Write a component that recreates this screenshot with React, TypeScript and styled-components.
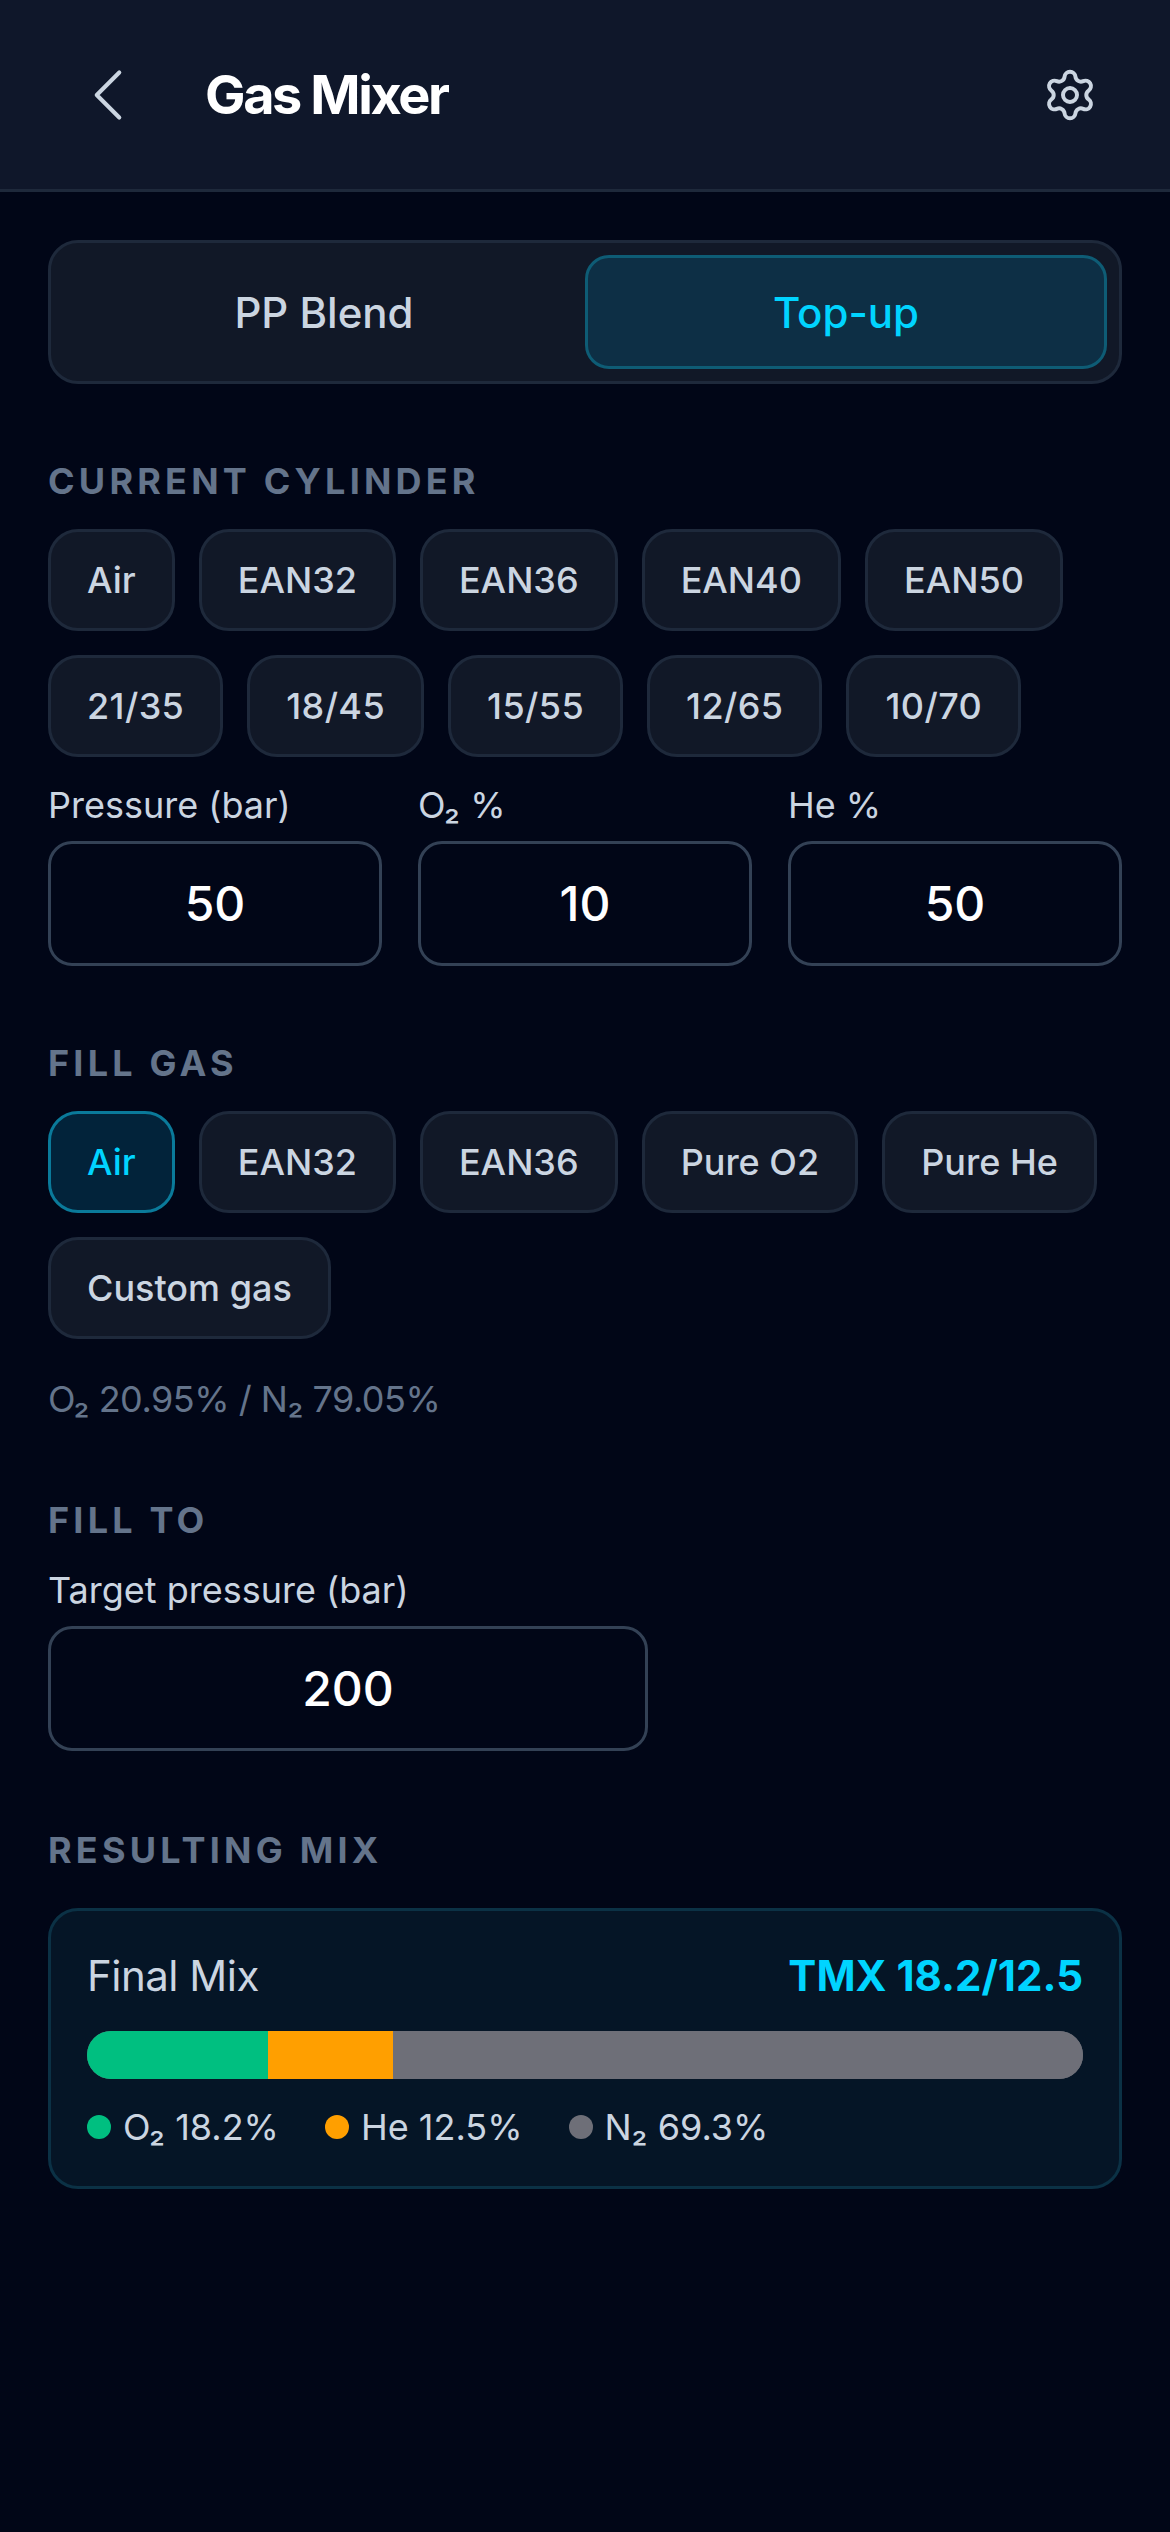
import styled, { createGlobalStyle } from "styled-components";
import { ChevronLeft, Settings } from "lucide-react";

const GlobalStyle = createGlobalStyle`
    html, body {
        margin: 0;
        padding: 0;
        background: #010617;
    }
    * {
        box-sizing: border-box;
    }
`

const Page = styled.div`
    width: 1170px;
    min-height: 2532px;
    background: #010617;
    font-family: Inter, "Liberation Sans", sans-serif;
    color: #cbd5e1;
`

const Header = styled.header`
    height: 192px;
    display: flex;
    align-items: center;
    background: #0f172a;
    border-bottom: 3px solid #1e293b;
    padding: 0 72px 0 63px;
`

const BackIcon = styled(ChevronLeft)`
    color: #cbd5e1;
    flex-shrink: 0;
`

const Title = styled.h1`
    flex: 1;
    margin: 0 0 0 52px;
    font-size: 54px;
    line-height: 66px;
    font-weight: 700;
    letter-spacing: -2.4px;
    color: #fff;
`

const SettingsIcon = styled(Settings)`
    color: #cbd5e1;
`

const Main = styled.main`
    padding: 48px;
`

const Segments = styled.div`
    height: 144px;
    display: grid;
    grid-template-columns: 1fr 1fr;
    padding: 12px;
    background: #111827;
    border: 3px solid #1e293b;
    border-radius: 30px;
`

const Segment = styled.div<{ $active?: boolean }>`
    display: flex;
    align-items: center;
    justify-content: center;
    font-size: 42px;
    font-weight: 500;
    border-radius: 24px;
    border: 3px solid ${props => props.$active ? "#0e5c75" : "transparent"};
    background: ${props => props.$active ? "#0d2f45" : "transparent"};
    color: ${props => props.$active ? "#00d4ff" : "#cbd5e1"};
`

const Section = styled.section<{ $top?: number }>`
    margin-top: ${props => props.$top ?? 75}px;
`

const SectionLabel = styled.h2<{ $gap?: number }>`
    margin: 0 0 ${props => props.$gap ?? 26}px;
    font-size: 36px;
    line-height: 44px;
    font-weight: 700;
    letter-spacing: 4.2px;
    color: #64748b;
`

const Chips = styled.div`
    display: flex;
    flex-wrap: wrap;
    gap: 24px;
`

const Chip = styled.div<{ $active?: boolean; $blend?: boolean }>`
    height: 102px;
    padding: 0 36px;
    display: flex;
    align-items: center;
    font-size: 36px;
    font-weight: 500;
    letter-spacing: ${props => props.$blend ? "0.4px" : "normal"};
    border-radius: 30px;
    border: 3px solid ${props => props.$active ? "#0a7a9a" : "#1e293b"};
    background: ${props => props.$active ? "#02233a" : "#111827"};
    color: ${props => props.$active ? "#00d4ff" : "#cbd5e1"};
`

const Fields = styled.div`
    margin-top: 24px;
    display: grid;
    grid-template-columns: repeat(3, 1fr);
    gap: 36px;
`

const Field = styled.div<{ $width?: number }>`
    ${props => props.$width ? `width: ${props.$width}px;` : ""}
`

const FieldLabel = styled.div`
    font-size: 36px;
    line-height: 48px;
    margin-bottom: 12px;
    color: #cbd5e1;
`

const ValueBox = styled.div`
    height: 125px;
    display: flex;
    align-items: center;
    justify-content: center;
    font-size: 48px;
    font-weight: 500;
    color: #fff;
    background: #010617;
    border: 3px solid #334155;
    border-radius: 24px;
`

const GasNote = styled.div`
    margin-top: 38px;
    font-size: 36px;
    line-height: 44px;
    letter-spacing: -0.5px;
    color: #64748b;
`

const MixCard = styled.div`
    padding: 33px 36px;
    height: 281px;
    background: #051526;
    border: 3px solid #0b3145;
    border-radius: 30px;
`

const MixHead = styled.div`
    display: flex;
    justify-content: space-between;
    align-items: center;
    height: 62px;
    margin-bottom: 25px;
`

const MixName = styled.span`
    font-size: 42px;
    letter-spacing: -0.5px;
    color: #cbd5e1;
`

const MixResult = styled.span`
    font-size: 42px;
    font-weight: 700;
    color: #00d4ff;
`

const Bar = styled.div`
    height: 48px;
    display: flex;
    overflow: hidden;
    border-radius: 24px;
    background: #6e6f78;
`

const BarPart = styled.div<{ $color: string }>`
    background: ${props => props.$color};
`

const Legend = styled.div`
    margin-top: 24px;
    display: flex;
    gap: 46px;
`

const LegendItem = styled.div`
    display: flex;
    align-items: center;
    gap: 12px;
    font-size: 36px;
    line-height: 48px;
    color: #cbd5e1;
`

const Dot = styled.span<{ $color: string }>`
    width: 24px;
    height: 24px;
    border-radius: 50%;
    background: ${props => props.$color};
`

const GREEN = "#00bf80"
const ORANGE = "#ff9f00"
const GREY = "#6e6f78"

const currentGases = ["Air", "EAN32", "EAN36", "EAN40", "EAN50", "21/35", "18/45", "15/55", "12/65", "10/70"]
const fillGases = ["Air", "EAN32", "EAN36", "Pure O2", "Pure He", "Custom gas"]

export default function App() {
    return <Page>
        <GlobalStyle />
        <Header>
            <BackIcon size={90} strokeWidth={1.1} />
            <Title>Gas Mixer</Title>
            <SettingsIcon size={56} strokeWidth={1.7} />
        </Header>
        <Main>
            <Segments>
                <Segment>PP Blend</Segment>
                <Segment $active>Top-up</Segment>
            </Segments>

            <Section>
                <SectionLabel>CURRENT CYLINDER</SectionLabel>
                <Chips>
                    {currentGases.map(gas => <Chip key={gas} $blend={gas.includes("/")}>{gas}</Chip>)}
                </Chips>
                <Fields>
                    <Field>
                        <FieldLabel>Pressure (bar)</FieldLabel>
                        <ValueBox>50</ValueBox>
                    </Field>
                    <Field>
                        <FieldLabel>O₂ %</FieldLabel>
                        <ValueBox>10</ValueBox>
                    </Field>
                    <Field>
                        <FieldLabel>He %</FieldLabel>
                        <ValueBox>50</ValueBox>
                    </Field>
                </Fields>
            </Section>

            <Section>
                <SectionLabel>FILL GAS</SectionLabel>
                <Chips>
                    {fillGases.map((gas, i) => <Chip key={gas} $active={i === 0}>{gas}</Chip>)}
                </Chips>
                <GasNote>O₂ 20.95% / N₂ 79.05%</GasNote>
            </Section>

            <Section $top={77}>
                <SectionLabel $gap={24}>FILL TO</SectionLabel>
                <Field $width={600}>
                    <FieldLabel>Target pressure (bar)</FieldLabel>
                    <ValueBox>200</ValueBox>
                </Field>
            </Section>

            <Section $top={77}>
                <SectionLabel $gap={36}>RESULTING MIX</SectionLabel>
                <MixCard>
                    <MixHead>
                        <MixName>Final Mix</MixName>
                        <MixResult>TMX 18.2/12.5</MixResult>
                    </MixHead>
                    <Bar>
                        <BarPart $color={GREEN} style={{ width: "18.2%" }} />
                        <BarPart $color={ORANGE} style={{ width: "12.5%" }} />
                        <BarPart $color={GREY} style={{ width: "69.3%" }} />
                    </Bar>
                    <Legend>
                        <LegendItem><Dot $color={GREEN} />O₂ 18.2%</LegendItem>
                        <LegendItem><Dot $color={ORANGE} />He 12.5%</LegendItem>
                        <LegendItem><Dot $color={GREY} />N₂ 69.3%</LegendItem>
                    </Legend>
                </MixCard>
            </Section>
        </Main>
    </Page>
}
